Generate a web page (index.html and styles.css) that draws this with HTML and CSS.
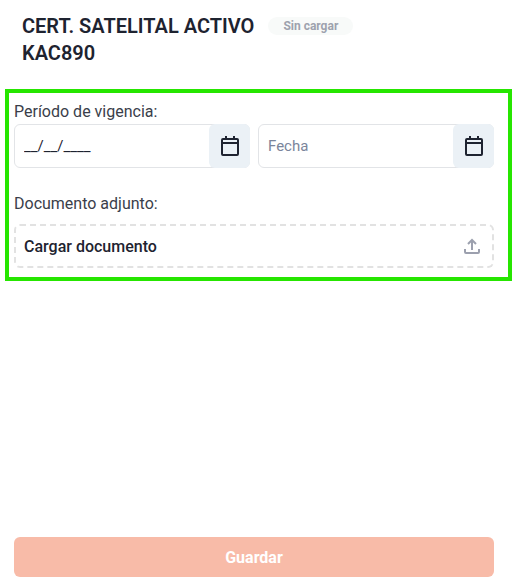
FILE: index.html
```html
<!DOCTYPE html>
<html lang="es">
<head>
  <meta charset="UTF-8">
  <meta name="viewport" content="width=device-width, initial-scale=1">
  <title>CERT. SATELITAL ACTIVO</title>
  <link rel="stylesheet" href="styles.css">
</head>
<body>
  <header class="header">
    <h1>CERT. SATELITAL ACTIVO<br>KAC890</h1>
    <span class="badge">Sin cargar</span>
  </header>

  <form class="form">
    <div class="fields">
      <label class="label" for="desde">Período de vigencia:</label>
      <div class="dates">
        <div class="date">
          <input type="text" id="desde" value="__/__/____">
          <button type="button" class="date-btn" aria-label="Abrir calendario">
            <svg width="18" height="20" viewBox="0 0 18 20" fill="none" stroke="currentColor" stroke-width="2">
              <rect x="1" y="3" width="16" height="16" rx="1"/>
              <path d="M1 7h16M5 0v3M13 0v3"/>
            </svg>
          </button>
        </div>
        <div class="date">
          <input type="text" id="hasta" placeholder="Fecha" aria-label="Fecha">
          <button type="button" class="date-btn" aria-label="Abrir calendario">
            <svg width="18" height="20" viewBox="0 0 18 20" fill="none" stroke="currentColor" stroke-width="2">
              <rect x="1" y="3" width="16" height="16" rx="1"/>
              <path d="M1 7h16M5 0v3M13 0v3"/>
            </svg>
          </button>
        </div>
      </div>

      <label class="label label-doc" for="documento">Documento adjunto:</label>
      <button type="button" class="upload" id="documento">
        Cargar documento
        <svg width="16" height="16" viewBox="0 0 16 16" fill="none" stroke="currentColor" stroke-width="2">
          <path d="M8 12V2M4 6l4-4 4 4M1 11v3q0 1 1 1h12q1 0 1-1v-3"/>
        </svg>
      </button>
    </div>

    <button type="submit" class="save">Guardar</button>
  </form>
</body>
</html>
```
FILE: styles.css
```css
* {
  box-sizing: border-box;
}

body {
  display: flex;
  flex-direction: column;
  min-height: 100vh;
  margin: 0;
  font-family: Roboto, sans-serif;
  font-size: 16px;
  background-color: #fff;
  color: #1e2330;
}

input,
button {
  font-family: inherit;
  color: inherit;
}

button {
  cursor: pointer;
}

.header {
  display: flex;
  align-items: flex-start;
  gap: 14px;
  padding: 13px 22px 22px;
}

h1 {
  margin: 0;
  font-size: 20px;
  font-weight: 600;
  line-height: 27px;
}

.badge {
  margin-top: 4px;
  padding: 0 15px;
  border-radius: 9px;
  font-size: 12px;
  font-weight: 700;
  line-height: 18px;
  background-color: #f8faf9;
  color: #9ea2ae;
}

.form {
  flex: 1;
  display: flex;
  flex-direction: column;
  justify-content: space-between;
}

.fields {
  margin: 0 1px 0 5px;
  padding: 7px 14px 9px 5px;
  border: 4px solid #26e600;
}

.label {
  display: block;
  line-height: 24px;
  color: #3a3e4a;
}

.dates {
  display: flex;
  gap: 8px;
}

.date {
  flex: 1;
  display: flex;
  min-width: 0;
  height: 44px;
  border: 1px solid #e2e4e7;
  border-radius: 6px;
}

.date input {
  flex: 1;
  min-width: 0;
  padding: 0 9px;
  border: none;
  background: none;
  font-size: 15px;
  outline: none;
}

.date input::placeholder {
  color: #7a859b;
}

.date-btn {
  display: flex;
  align-items: center;
  justify-content: center;
  width: 41px;
  margin: -1px;
  padding: 0;
  border: none;
  border-radius: 6px;
  background-color: #ebf1f6;
}

.label-doc {
  margin-top: 24px;
}

.upload {
  display: flex;
  align-items: center;
  justify-content: space-between;
  width: 100%;
  height: 44px;
  margin-top: 8px;
  padding: 0 12px 0 8px;
  border: 2px dashed #e2e2e2;
  border-radius: 6px;
  background: none;
  font-size: 16px;
  font-weight: 500;
}

.upload svg {
  color: #9ca0ae;
}

.save {
  height: 40px;
  margin: 10px 19px 10px 14px;
  border: none;
  border-radius: 6px;
  background-color: #f8bba8;
  color: #fff;
  font-size: 16px;
  font-weight: 700;
}
```
